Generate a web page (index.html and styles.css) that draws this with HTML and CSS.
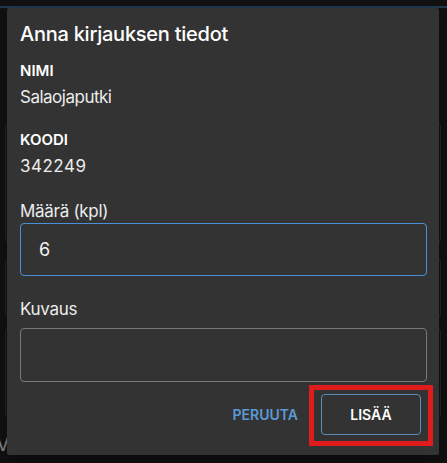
FILE: index.html
```html
<!DOCTYPE html>
<html lang="fi">
<head>
<meta charset="utf-8">
<title>Anna kirjauksen tiedot</title>
<link rel="stylesheet" href="styles.css">
</head>
<body>
<div class="page">
  <div class="topline"></div>
  <div class="under">
    <div class="under-box b1"></div>
    <div class="under-box b2"></div>
    <div class="under-box b3"></div>
    <div class="under-text">V</div>
  </div>
</div>
<div class="dialog">
  <h2 class="title">Anna kirjauksen tiedot</h2>
  <div class="field-label">NIMI</div>
  <div class="field-value">Salaojaputki</div>
  <div class="field-label koodi">KOODI</div>
  <div class="field-value num">342249</div>
  <label class="input-label maara">Määrä (kpl)</label>
  <div class="input focused">6</div>
  <label class="input-label kuvaus">Kuvaus</label>
  <div class="input empty"></div>
  <div class="actions">
    <button class="btn-text">PERUUTA</button>
    <div class="highlight-wrap">
      <button class="btn-outline">LISÄÄ</button>
      <div class="highlight"></div>
    </div>
  </div>
</div>
</body>
</html>
```
FILE: styles.css
```css
* { box-sizing: border-box; }
html, body { margin: 0; padding: 0; }
body {
  background: #111111;
  width: 447px;
  height: 463px;
  overflow: hidden;
  font-family: Inter, "Noto Sans", "Liberation Sans", sans-serif;
  position: relative;
}
.page { height: 463px; }
.topline {
  margin-top: 6px;
  height: 2px;
  background: #1f3a52;
}
.under { position: relative; height: 455px; }
.under-box {
  position: absolute;
  left: 5px;
  width: 436px;
  border: 1px solid #2a2a2a;
  border-radius: 4px;
}
.b1 { top: 115px; height: 120px; }
.b2 { top: 250px; height: 60px; }
.b3 { top: 320px; height: 90px; }
.under-text {
  position: absolute;
  left: -4px;
  top: 424px;
  color: #8a8a8a;
  font-size: 20px;
}
.dialog {
  position: absolute;
  left: 7px;
  top: 8px;
  width: 432px;
  height: 447px;
  background: #333333;
  border-radius: 2px;
  box-shadow: 0 6px 16px rgba(0,0,0,0.4);
  padding: 14px 12px 0 13px;
  display: flex;
  flex-direction: column;
  color: #ffffff;
}
.title {
  margin: 0;
  font-size: 20px;
  line-height: 24px;
  font-weight: 500;
  letter-spacing: -0.25px;
}
.field-label {
  margin-top: 16px;
  font-size: 15px;
  line-height: 18px;
  font-weight: 600;
}
.field-label.koodi { margin-top: 24px; }
.field-value {
  margin-top: 7px;
  font-size: 17px;
  line-height: 20px;
  color: #ececec;
  letter-spacing: -0.5px;
}
.field-value.num { letter-spacing: 0.5px; }
.input-label {
  display: block;
  font-size: 17px;
  line-height: 22px;
  color: #ececec;
  letter-spacing: -0.3px;
}
.maara { margin-top: 24px; }
.kuvaus { margin-top: 22px; }
.input {
  height: 53px;
  border: 1px solid #7a7a7a;
  border-radius: 4px;
  font-size: 18px;
  line-height: 51px;
  padding-left: 18px;
  color: #f2f2f2;
}
.input.focused {
  margin-top: 1px;
  border-color: #4a90d6;
}
.input.empty {
  margin-top: 8px;
  height: 54px;
}
.actions {
  margin-top: 12px;
  display: flex;
  justify-content: flex-end;
  align-items: center;
  padding-right: 6px;
}
.btn-text {
  background: none;
  border: none;
  font-family: inherit;
  font-size: 14px;
  font-weight: 600;
  color: #5b9bd5;
  padding: 0;
  margin-right: 23px;
  height: 41px;
}
.highlight-wrap { position: relative; }
.btn-outline {
  display: block;
  width: 100px;
  height: 41px;
  background: transparent;
  border: 1px solid #5d8fba;
  border-radius: 4px;
  font-family: inherit;
  font-size: 14px;
  font-weight: 600;
  color: #ffffff;
}
.highlight {
  position: absolute;
  left: -12px;
  top: -9px;
  width: 124px;
  height: 61px;
  border: 5px solid #e01b1b;
}
```
